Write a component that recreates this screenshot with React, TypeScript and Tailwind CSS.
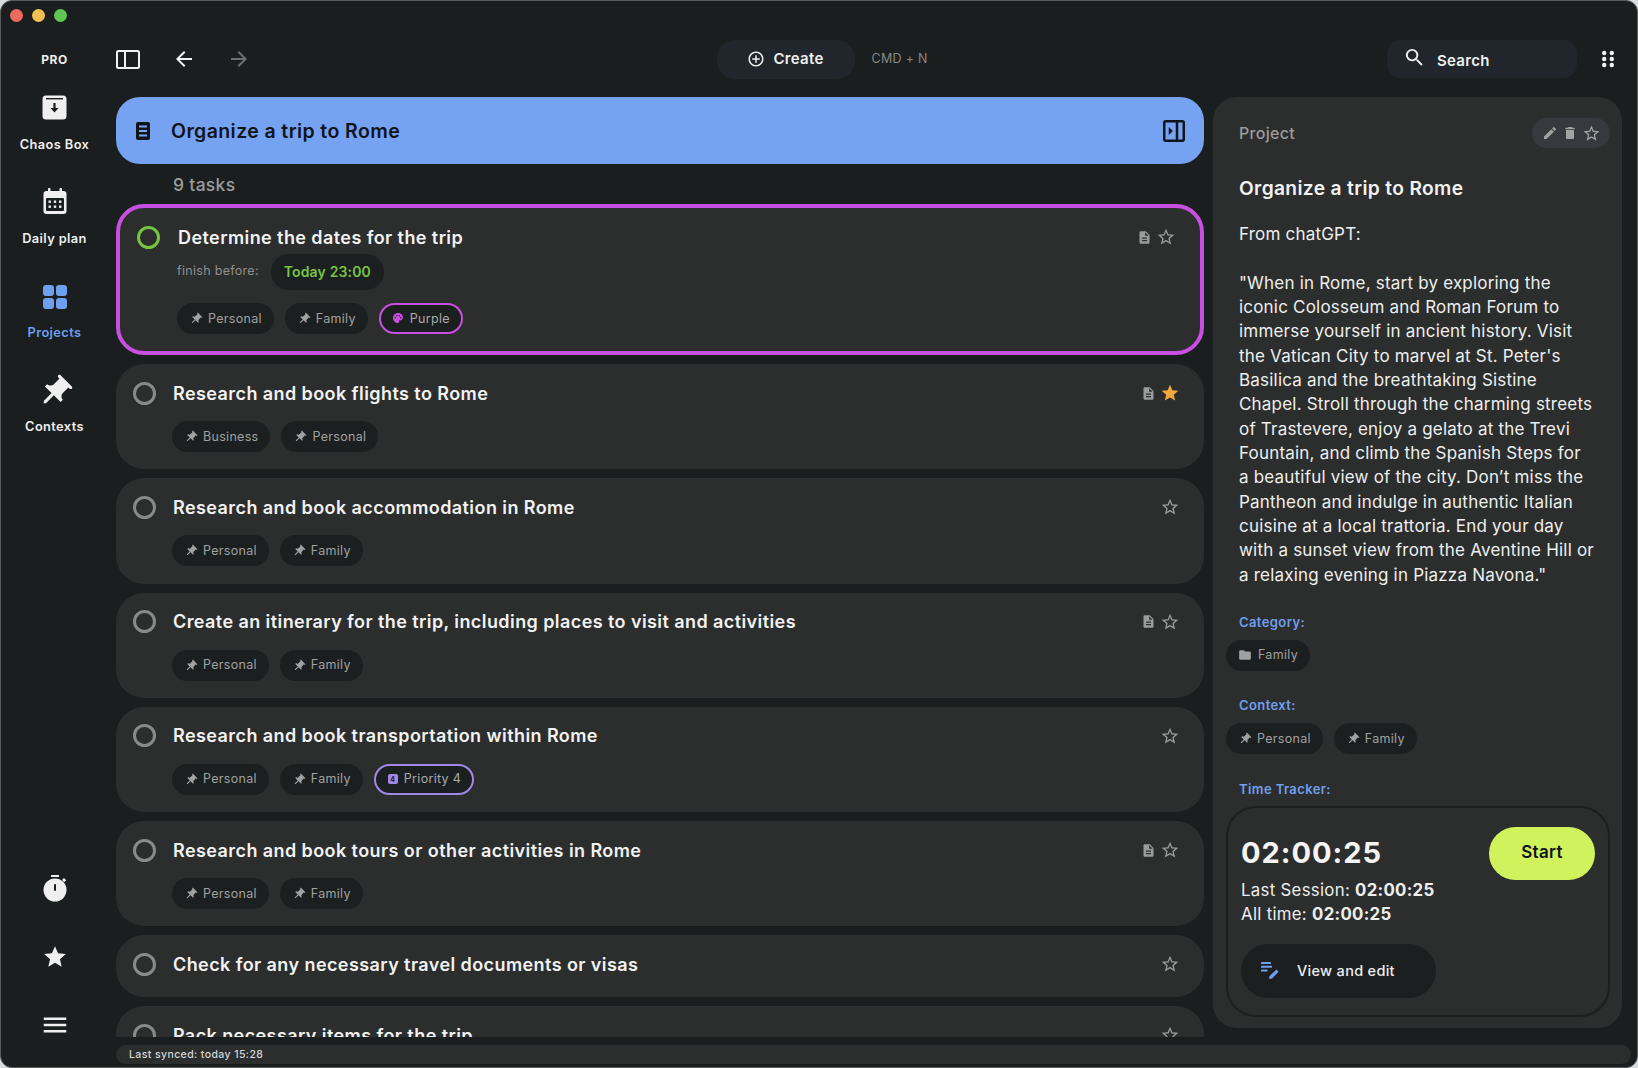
import React from "react";
import {
  MdPushPin, MdDescription, MdStarBorder, MdStar, MdMenu, MdSearch, MdEdit, MdDelete, MdFolder, MdPalette,
  MdAddCircleOutline, MdArrowBack, MdArrowForward,
} from "react-icons/md";

type Tag = { label: string; kind?: "pin" | "purple" | "priority" };

const Pin = ({ size = 14 }: { size?: number }) => <MdPushPin size={size} className="rotate-45 shrink-0" />;

function Pill({ tag }: { tag: Tag }) {
  if (tag.kind === "purple")
    return (
      <span className="h-[31px] flex items-center gap-[6px] pl-[11px] pr-[11px] pt-[1px] rounded-full bg-[#1c1f1f] border-2 border-[#c850e0] text-[12.5px] text-[#a9aaaa] tracking-[0.3px]">
        <MdPalette size={12} className="text-[#c850e0] -mt-[2px]" />
        {tag.label}
      </span>
    );
  if (tag.kind === "priority")
    return (
      <span className="h-[31px] flex items-center gap-[6px] pl-[12px] pr-[11px] pt-[1px] rounded-full bg-[#1c1f1f] border-2 border-[#a188e8] text-[12.5px] text-[#a9aaaa] tracking-[0.3px]">
        <span className="w-[10px] h-[10px] -mt-[1px] rounded-[2px] bg-[#a188e8] flex items-center justify-center text-[7px] font-bold text-[#1c1f1f] leading-none">4</span>
        {tag.label}
      </span>
    );
  return (
    <span className="h-[31px] flex items-center gap-[5px] pl-[12px] pr-[12px] pt-[1px] rounded-full bg-[#1c1f1f] text-[12.5px] text-[#a0a1a1] tracking-[0.3px]">
      <Pin />
      {tag.label}
    </span>
  );
}

function Check({ green }: { green?: boolean }) {
  return <span className={"block w-[23px] h-[23px] rounded-full border-[3px] shrink-0 " + (green ? "border-[#76c442]" : "border-[#8a8a8a]")} />;
}

type Task = { title: string; tags: Tag[]; doc?: boolean; fav?: boolean };

const tasks: Task[] = [
  { title: "Research and book flights to Rome", tags: [{ label: "Business" }, { label: "Personal" }], doc: true, fav: true },
  { title: "Research and book accommodation in Rome", tags: [{ label: "Personal" }, { label: "Family" }] },
  { title: "Create an itinerary for the trip, including places to visit and activities", tags: [{ label: "Personal" }, { label: "Family" }], doc: true },
  { title: "Research and book transportation within Rome", tags: [{ label: "Personal" }, { label: "Family" }, { label: "Priority 4", kind: "priority" }] },
  { title: "Research and book tours or other activities in Rome", tags: [{ label: "Personal" }, { label: "Family" }], doc: true },
  { title: "Check for any necessary travel documents or visas", tags: [] },
  { title: "Pack necessary items for the trip", tags: [] },
];

function TaskCard({ task }: { task: Task }) {
  return (
    <div className={"shrink-0 rounded-[28px] bg-[#2c2e2e] pl-[17px] pr-[24px] pt-[17px] " + (task.tags.length ? "h-[105.25px]" : "h-[62px]")}>
      <div className="flex items-center h-[24px]">
        <Check />
        <span className="ml-[17px] text-[18px] font-semibold text-[#f2f2f2] tracking-[0.42px] flex-1">{task.title}</span>
        {task.doc && <MdDescription size={15} className="text-[#9a9b9b] mr-[4px]" />}
        {task.fav ? <MdStar size={20} className="text-[#f4a73c]" /> : <MdStarBorder size={20} className="text-[#9a9b9b]" />}
      </div>
      {task.tags.length > 0 && (
        <div className="flex gap-[11px] mt-[16px] ml-[39px]">
          {task.tags.map((t) => <Pill key={t.label} tag={t} />)}
        </div>
      )}
    </div>
  );
}

function NavItem({ icon, label, active }: { icon: React.ReactNode; label: string; active?: boolean }) {
  return (
    <div className="h-[94px] flex flex-col items-center">
      <div className="h-[36px] flex items-center justify-center">{icon}</div>
      <span className={"mt-[10px] text-[12.8px] font-semibold tracking-[0.4px] " + (active ? "text-[#6f9fef]" : "text-[#eeeeee]")}>{label}</span>
    </div>
  );
}

const ChaosIcon = () => (
  <svg width="25" height="25" viewBox="0 0 25 25">
    <path d="M4 0.5h17a3.5 3.5 0 0 1 3.5 3.5v17a3.5 3.5 0 0 1-3.5 3.5H4A3.5 3.5 0 0 1 .5 21V4A3.5 3.5 0 0 1 4 .5z" fill="#efefef" />
    <rect x="4" y="3" width="17" height="1.4" fill="#1b1e1e" />
    <path d="M11.4 8h2.2v5h2.9l-4 4.6-4-4.6h2.9z" fill="#1b1e1e" />
  </svg>
);
const CalendarIcon = () => (
  <svg width="24" height="26" viewBox="0 0 24 26">
    <rect x="0.5" y="3" width="23" height="23" rx="3" fill="#efefef" />
    <rect x="5" y="0" width="2.5" height="5" rx="1" fill="#efefef" />
    <rect x="16.5" y="0" width="2.5" height="5" rx="1" fill="#efefef" />
    <rect x="3" y="10" width="18" height="13" rx="1" fill="#1b1e1e" />
    {[5.5, 10.8, 16].map((x) => [12.5, 17.5].map((y) => <rect key={x + "-" + y} x={x} y={y} width="2.4" height="2.4" fill="#efefef" />))}
  </svg>
);
const ProjectsIcon = () => (
  <svg width="24" height="24" viewBox="0 0 24 24" fill="#6f9fef" className="mt-[4px]">
    <rect x="0" y="0" width="11" height="11" rx="3" />
    <rect x="13" y="0" width="11" height="11" rx="3" />
    <rect x="0" y="13" width="11" height="11" rx="3" />
    <rect x="13" y="13" width="11" height="11" rx="3" />
  </svg>
);
const TimerIcon = () => (
  <svg width="24" height="27" viewBox="0 0 24 27">
    <rect x="8" y="0" width="8" height="2" fill="#efefef" />
    <circle cx="12" cy="15" r="11.5" fill="#efefef" />
    <path d="M19 5l2-2 2.2 2.2-2 2z" fill="#efefef" />
    <rect x="11" y="9" width="2" height="7" rx="1" fill="#1b1e1e" />
  </svg>
);
const ToggleIcon = () => (
  <svg width="24" height="19" viewBox="0 0 24 19" fill="none" stroke="#f2f2f2" strokeWidth="2">
    <rect x="1" y="1" width="22" height="17" rx="1.5" />
    <path d="M9 1v17" />
  </svg>
);
const RightPanelIcon = () => (
  <svg width="22" height="22" viewBox="0 0 22 22" fill="none" stroke="#10141c" strokeWidth="2.5">
    <rect x="1.25" y="1.25" width="19.5" height="19.5" rx="1.5" />
    <path d="M14 1v20" />
    <path d="M6 7.5l3.5 3.5-3.5 3.5z" fill="#10141c" strokeWidth="0.5" />
  </svg>
);
const DotsIcon = () => (
  <svg width="12" height="18" viewBox="0 0 12 18" fill="#f2f2f2">
    {[3, 9, 15].map((y) => [2.2, 9.8].map((x) => <circle key={x + "-" + y} cx={x} cy={y} r="2.2" />))}
  </svg>
);
const ListDocIcon = () => (
  <svg width="14" height="18" viewBox="0 0 14 18">
    <rect width="14" height="18" rx="2" fill="#10141c" />
    <rect x="3" y="3.5" width="8" height="2" fill="#7aa5f0" />
    <rect x="3" y="8" width="8" height="2" fill="#7aa5f0" />
    <rect x="3" y="12.5" width="8" height="2" fill="#7aa5f0" />
  </svg>
);
const ViewEditIcon = () => (
  <svg width="18" height="17" viewBox="0 0 18 17" fill="#6f9fef">
    <rect x="0" y="0" width="10" height="2" rx="0.6" />
    <rect x="0" y="3.8" width="11" height="2" rx="0.6" />
    <rect x="0" y="7.6" width="6.5" height="2" rx="0.6" />
    <path d="M15.4 7.6l2.2 2.2-6.6 6.6c-.4.3-2.6.6-2.8.4-.2-.2.1-2.4.4-2.8z" />
  </svg>
);

const lines = [
  '"When in Rome, start by exploring the',
  "iconic Colosseum and Roman Forum to",
  "immerse yourself in ancient history. Visit",
  "the Vatican City to marvel at St. Peter's",
  "Basilica and the breathtaking Sistine",
  "Chapel. Stroll through the charming streets",
  "of Trastevere, enjoy a gelato at the Trevi",
  "Fountain, and climb the Spanish Steps for",
  "a beautiful view of the city. Don’t miss the",
  "Pantheon and indulge in authentic Italian",
  "cuisine at a local trattoria. End your day",
  "with a sunset view from the Aventine Hill or",
  'a relaxing evening in Piazza Navona."',
];

export default function App() {
  return (
    <div className="w-[1638px] h-[1068px] bg-[#d8dcdc] overflow-hidden" style={{ fontFamily: 'Inter, "Liberation Sans", sans-serif' }}>
      <div className="w-full h-full rounded-[12px] bg-[#1b1e1e] border border-[#5a5c5c] flex flex-col overflow-hidden">
        <div className="h-[27px] shrink-0 flex items-center gap-[9px] pl-[9px] pt-[1px]">
          <span className="w-[13px] h-[13px] rounded-full bg-[#ec6a5e]" />
          <span className="w-[13px] h-[13px] rounded-full bg-[#f4bf4f]" />
          <span className="w-[13px] h-[13px] rounded-full bg-[#61c554]" />
        </div>
        <div className="flex flex-1 min-h-0">
          <aside className="w-[107px] mr-[8px] shrink-0 flex flex-col items-center">
            <span className="mt-[24px] h-[16px] flex items-center text-[12px] font-bold tracking-[0.5px] text-[#f0f0f0]">PRO</span>
            <div className="mt-[21px] flex flex-col self-stretch">
              <NavItem icon={<ChaosIcon />} label="Chaos Box" />
              <NavItem icon={<CalendarIcon />} label="Daily plan" />
              <NavItem icon={<ProjectsIcon />} label="Projects" active />
              <NavItem
                icon={<MdPushPin size={38} className="rotate-45 text-[#efefef] mt-[6px]" />}
                label="Contexts"
              />
            </div>
            <div className="mt-auto flex flex-col items-center pb-[27px]">
              <TimerIcon />
              <MdStar size={26} className="mt-[42px] text-[#efefef]" />
              <MdMenu size={30} className="mt-[40px] text-[#efefef]" />
            </div>
          </aside>
          <div className="flex-1 min-w-0 flex flex-col pr-[6px] pb-[3px]">
            <div className="h-[69px] shrink-0 flex items-center pb-[7px]">
              <ToggleIcon />
              <MdArrowBack size={24} className="ml-[32px] text-[#f2f2f2]" />
              <MdArrowForward size={24} className="ml-[31px] text-[#6d6f6f]" />
              <div className="flex-1 flex items-center justify-center pr-[6px]">
                <div className="ml-[16px] flex items-center justify-center gap-[8px] w-[138px] h-[39px] rounded-[18px] bg-[#21262c] text-[#efefef] text-[15px] font-semibold tracking-[0.3px]">
                  <MdAddCircleOutline size={18} />
                  <span className="mt-[1px]">Create</span>
                </div>
                <span className="ml-[17px] mt-[1px] w-[60px] text-[12.5px] text-[#858787] tracking-[0.3px]">CMD + N</span>
              </div>
              <div className="w-[190px] h-[38px] rounded-[14px] bg-[#21262c] flex items-center pl-[16px] text-[#efefef]">
                <MdSearch size={23} className="-mt-[3px]" />
                <span className="ml-[11px] text-[15px] font-semibold tracking-[0.3px] mt-[5px]">Search</span>
              </div>
              <span className="ml-[25px] mr-[17px]"><DotsIcon /></span>
            </div>
            <div className="flex-1 min-h-0 flex gap-[9px] pr-[3px]">
              <div className="w-[1088px] shrink-0 flex flex-col">
                <div className="h-[67px] shrink-0 rounded-[24px] bg-[#75a2f1] flex items-center pl-[20px] pr-[19px]">
                  <ListDocIcon />
                  <span className="ml-[21px] mt-[2px] text-[19.5px] font-semibold text-[#10141c] tracking-[0.4px] flex-1">Organize a trip to Rome</span>
                  <RightPanelIcon />
                </div>
                <div className="h-[40px] shrink-0 flex items-center pl-[57px] pt-[3px] text-[17.5px] font-medium text-[#9a9b9b] tracking-[0.3px]">9 tasks</div>
                <div className="flex-1 min-h-0 overflow-hidden flex flex-col gap-[9px] mb-[8px]">
                  <div className="shrink-0 h-[151px] rounded-[28px] bg-[#2c2e2e] border-[4px] border-[#c850e0] pl-[17px] pr-[24px] pt-[17px]">
                    <div className="flex items-center h-[24px]">
                      <Check green />
                      <span className="ml-[18px] text-[18px] font-semibold text-[#f2f2f2] tracking-[0.42px] flex-1">Determine the dates for the trip</span>
                      <MdDescription size={15} className="text-[#9a9b9b] mr-[4px]" />
                      <MdStarBorder size={20} className="text-[#9a9b9b]" />
                    </div>
                    <div className="flex items-center h-[37px] ml-[40px] mt-[4px]">
                      <span className="text-[12.5px] text-[#8e8f8f] tracking-[0.3px]">finish before:</span>
                      <span className="ml-[12px] h-[36px] w-[113px] rounded-[18px] bg-[#1c1f1f] flex items-center justify-center text-[14px] font-semibold text-[#76c442] tracking-[0.15px]">Today 23:00</span>
                    </div>
                    <div className="flex gap-[11px] mt-[13px] ml-[40px]">
                      <Pill tag={{ label: "Personal" }} />
                      <Pill tag={{ label: "Family" }} />
                      <Pill tag={{ label: "Purple", kind: "purple" }} />
                    </div>
                  </div>
                  {tasks.map((t) => <TaskCard key={t.title} task={t} />)}
                </div>
              </div>
              <section className="w-[409px] shrink-0 h-[931px] rounded-[24px] bg-[#2c2e2e] px-[13px] pt-[21px] flex flex-col">
                <div className="flex items-center h-[30px] pl-[13px]">
                  <span className="flex-1 text-[16px] font-medium text-[#9a9b9b] tracking-[0.3px]">Project</span>
                  <div className="w-[78px] h-[30px] -mr-[1px] rounded-full bg-[#363a3e] flex items-center justify-center gap-[4px] text-[#a2a3a3]">
                    <MdEdit size={16} />
                    <MdDelete size={16} />
                    <MdStarBorder size={19} />
                  </div>
                </div>
                <h1 className="mt-[26px] pl-[13px] text-[19.2px] leading-[28px] font-semibold text-[#f2f2f2] tracking-[0.35px]">Organize a trip to Rome</h1>
                <div className="mt-[20px] pl-[13px] text-[17px] leading-[24.35px] text-[#eeeeee] tracking-[0.2px]">
                  <p>From chatGPT:</p>
                  <p className="mt-[24.35px]">
                    {lines.map((l) => <span key={l} className="block whitespace-nowrap">{l}</span>)}
                  </p>
                </div>
                <div className="mt-[26px] pl-[13px] text-[13px] font-semibold text-[#6f9fef] tracking-[0.4px]">Category:</div>
                <div className="mt-[7px] flex">
                  <span className="h-[31px] flex items-center gap-[6px] pl-[12px] pr-[12px] pt-[1px] rounded-full bg-[#1c1f1f] text-[12.5px] text-[#a0a1a1] tracking-[0.3px]">
                    <MdFolder size={14} className="-mt-[1px]" />
                    Family
                  </span>
                </div>
                <div className="mt-[25px] pl-[13px] text-[13px] font-semibold text-[#6f9fef] tracking-[0.4px]">Context:</div>
                <div className="mt-[8px] flex gap-[11px]">
                  <Pill tag={{ label: "Personal" }} />
                  <Pill tag={{ label: "Family" }} />
                </div>
                <div className="mt-[26px] pl-[13px] text-[13px] font-semibold text-[#6f9fef] tracking-[0.4px]">Time Tracker:</div>
                <div className="mt-[6px] w-[384px] h-[211px] rounded-[30px] border-2 border-[#1c1f1f] pl-[13px] pr-[13px] pt-[19px] flex flex-col">
                  <div className="flex justify-between">
                    <span className="mt-[6px] text-[29px] font-bold text-[#f5f5f5] tracking-[1px] leading-[40px]">02:00:25</span>
                    <button className="w-[106px] h-[53px] rounded-[27px] bg-[#d0f25c] text-[17px] font-semibold text-[#10141c] tracking-[0.3px]">Start</button>
                  </div>
                  <div className="-mt-[2px] text-[16.8px] leading-[24px] text-[#eeeeee] tracking-[0.3px]">
                    <p>Last Session: <b className="font-bold">02:00:25</b></p>
                    <p>All time: <b className="font-bold">02:00:25</b></p>
                  </div>
                  <div className="mt-[18px] w-[195px] h-[54px] rounded-[27px] bg-[#1c1f1f] flex items-center pl-[20px]">
                    <ViewEditIcon />
                    <span className="ml-[18px] text-[14.5px] font-medium text-[#eeeeee] tracking-[0.3px]">View and edit</span>
                  </div>
                </div>
              </section>
            </div>
            <div className="h-[19px] shrink-0 rounded-[10px] bg-[#2c2e2e] flex items-center pl-[13px] pt-[1px] text-[10.5px] font-medium text-[#d5d6d6] tracking-[0.4px]">Last synced: today 15:28</div>
          </div>
        </div>
      </div>
    </div>
  );
}
